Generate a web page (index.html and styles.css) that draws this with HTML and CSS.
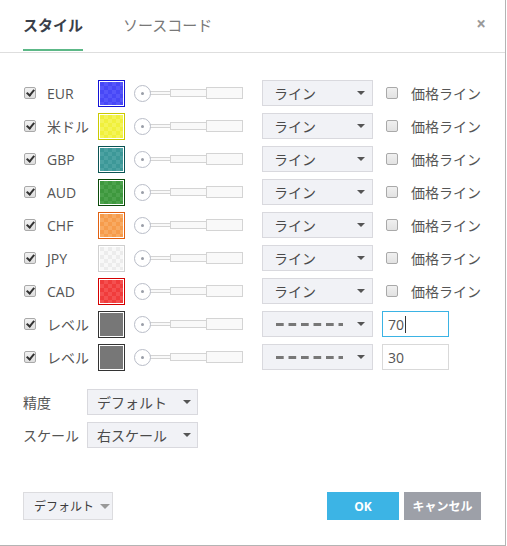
FILE: index.html
```html
<!DOCTYPE html>
<html lang="ja">
<head>
<meta charset="utf-8">
<link rel="stylesheet" href="styles.css">
</head>
<body>
<div class="dialog">
  <div class="header">
    <div class="tab active">スタイル</div>
    <div class="tab">ソースコード</div>
    <div class="close">×</div>
  </div>
  <div class="content">
    <div class="rows">
      <div class="row">
        <span class="cb checked"></span><span class="name">EUR</span>
        <span class="swatch" style="border-color:#1212d6;--fill:#4848f6;--fill2:#5656fa"></span>
        <span class="slider"><span class="knob"></span><span class="s1"></span><span class="s2"></span><span class="s3"></span></span>
        <span class="select"><span class="val">ライン</span><span class="arrow"></span></span>
        <span class="cb pcb"></span><span class="plabel">価格ライン</span>
      </div>
      <div class="row">
        <span class="cb checked"></span><span class="name">米ドル</span>
        <span class="swatch" style="border-color:#caca00;--fill:#f0f03c;--fill2:#f4f458"></span>
        <span class="slider"><span class="knob"></span><span class="s1"></span><span class="s2"></span><span class="s3"></span></span>
        <span class="select"><span class="val">ライン</span><span class="arrow"></span></span>
        <span class="cb pcb"></span><span class="plabel">価格ライン</span>
      </div>
      <div class="row">
        <span class="cb checked"></span><span class="name">GBP</span>
        <span class="swatch" style="border-color:#0b5454;--fill:#3d9898;--fill2:#4ca2a2"></span>
        <span class="slider"><span class="knob"></span><span class="s1"></span><span class="s2"></span><span class="s3"></span></span>
        <span class="select"><span class="val">ライン</span><span class="arrow"></span></span>
        <span class="cb pcb"></span><span class="plabel">価格ライン</span>
      </div>
      <div class="row">
        <span class="cb checked"></span><span class="name">AUD</span>
        <span class="swatch" style="border-color:#0a4a0a;--fill:#3e983e;--fill2:#4ca24c"></span>
        <span class="slider"><span class="knob"></span><span class="s1"></span><span class="s2"></span><span class="s3"></span></span>
        <span class="select"><span class="val">ライン</span><span class="arrow"></span></span>
        <span class="cb pcb"></span><span class="plabel">価格ライン</span>
      </div>
      <div class="row">
        <span class="cb checked"></span><span class="name">CHF</span>
        <span class="swatch" style="border-color:#e06010;--fill:#f69c4c;--fill2:#f8aa62"></span>
        <span class="slider"><span class="knob"></span><span class="s1"></span><span class="s2"></span><span class="s3"></span></span>
        <span class="select"><span class="val">ライン</span><span class="arrow"></span></span>
        <span class="cb pcb"></span><span class="plabel">価格ライン</span>
      </div>
      <div class="row">
        <span class="cb checked"></span><span class="name">JPY</span>
        <span class="swatch" style="border-color:#cfcfcf;--fill:#ececec;--fill2:#f8f8f8"></span>
        <span class="slider"><span class="knob"></span><span class="s1"></span><span class="s2"></span><span class="s3"></span></span>
        <span class="select"><span class="val">ライン</span><span class="arrow"></span></span>
        <span class="cb pcb"></span><span class="plabel">価格ライン</span>
      </div>
      <div class="row">
        <span class="cb checked"></span><span class="name">CAD</span>
        <span class="swatch" style="border-color:#d40000;--fill:#f03c3c;--fill2:#f45050"></span>
        <span class="slider"><span class="knob"></span><span class="s1"></span><span class="s2"></span><span class="s3"></span></span>
        <span class="select"><span class="val">ライン</span><span class="arrow"></span></span>
        <span class="cb pcb"></span><span class="plabel">価格ライン</span>
      </div>
      <div class="row">
        <span class="cb checked"></span><span class="name">レベル</span>
        <span class="swatch" style="border-color:#333;--fill:#777;--fill2:#777"></span>
        <span class="slider"><span class="knob"></span><span class="s1"></span><span class="s2"></span><span class="s3"></span></span>
        <span class="select"><span class="dashes"></span><span class="arrow"></span></span>
        <span class="input focused">70<span class="caret"></span></span>
      </div>
      <div class="row">
        <span class="cb checked"></span><span class="name">レベル</span>
        <span class="swatch" style="border-color:#333;--fill:#777;--fill2:#777"></span>
        <span class="slider"><span class="knob"></span><span class="s1"></span><span class="s2"></span><span class="s3"></span></span>
        <span class="select"><span class="dashes"></span><span class="arrow"></span></span>
        <span class="input">30</span>
      </div>
    </div>
    <div class="opts">
      <div class="optrow">
        <span class="olabel">精度</span>
        <span class="select small"><span class="val">デフォルト</span><span class="arrow"></span></span>
      </div>
      <div class="optrow">
        <span class="olabel">スケール</span>
        <span class="select small"><span class="val">右スケール</span><span class="arrow"></span></span>
      </div>
    </div>
  </div>
  <div class="footer">
    <span class="btn-default">デフォルト<span class="arrow light"></span></span>
    <span class="spacer"></span>
    <span class="btn ok">OK</span>
    <span class="btn cancel">キャンセル</span>
  </div>
</div>
</body>
</html>
```
FILE: styles.css
```css
* { box-sizing: border-box; }
html, body { margin: 0; padding: 0; background: #fff; }
body {
  font-family: "Open Sans", "Noto Sans CJK JP", sans-serif;
  font-size: 14px;
  color: #4a4a4a;
}
.dialog {
  width: 506px;
  height: 546px;
  border-right: 1px solid #b4b4b4;
  border-bottom: 1px solid #b4b4b4;
  display: flex;
  flex-direction: column;
  background: #fff;
}
.header {
  height: 53px;
  border-bottom: 1px solid #dedede;
  display: flex;
  align-items: stretch;
  padding-left: 23px;
  padding-right: 19px;
  flex: none;
}
.tab {
  font-size: 15px;
  color: #787878;
  display: flex;
  align-items: center;
  padding-top: 2px;
  padding-bottom: 3px;
  margin-right: 40px;
  border-bottom: 2px solid transparent;
  margin-bottom: 1px;
  white-space: nowrap;
}
.tab.active {
  color: #3a3f4a;
  font-weight: 700;
  border-bottom-color: #5cb887;
}
.close {
  margin-left: auto;
  color: #9a9a9a;
  font-size: 17px;
  font-weight: 700;
  display: flex;
  align-items: center;
  padding-bottom: 6px;
}
.content {
  flex: 1;
  padding-top: 27px;
}
.rows {
  display: flex;
  flex-direction: column;
  gap: 7px;
}
.row {
  height: 26px;
  display: flex;
  align-items: center;
  padding-left: 24px;
}
.cb {
  width: 12px;
  height: 12px;
  border: 1px solid #a9a9a9;
  border-radius: 2px;
  background: linear-gradient(#f2f2f2, #dedede);
  flex: none;
  position: relative;
}
.cb.checked::after {
  content: "";
  position: absolute;
  left: 3px;
  top: 0px;
  width: 3px;
  height: 6px;
  border-right: 2px solid #333;
  border-bottom: 2px solid #333;
  transform: rotate(40deg);
}
.name {
  width: 51px;
  margin-left: 11px;
  color: #555;
  white-space: nowrap;
}
.swatch {
  width: 27px;
  height: 27px;
  border: 1px solid;
  background-color: #fff;
  flex: none;
  position: relative;
}
.swatch::after {
  content: "";
  position: absolute;
  inset: 1px;
  background-color: var(--fill);
  background-image:
    linear-gradient(45deg, var(--fill2) 25%, transparent 25%, transparent 75%, var(--fill2) 75%),
    linear-gradient(45deg, var(--fill2) 25%, transparent 25%, transparent 75%, var(--fill2) 75%);
  background-size: 8px 8px;
  background-position: 0 0, 4px 4px;
}
.slider {
  margin-left: 9px;
  width: 110px;
  display: flex;
  align-items: center;
  flex: none;
}
.knob {
  width: 17px;
  height: 17px;
  min-width: 17px;
  border: 1px solid #b9bdc8;
  border-radius: 50%;
  background: #fff;
  position: relative;
  flex: none;
}
.knob::after {
  content: "";
  position: absolute;
  left: 6px;
  top: 6px;
  width: 3px;
  height: 3px;
  border-radius: 50%;
  background: #9a9ea8;
}
.s1, .s2, .s3 {
  border: 1px solid #d4d4d4;
  background: #f9f9f9;
  flex: none;
}
.s1 { width: 21px; height: 4px; margin-left: -1px; border-left: none; }
.s2 { width: 37px; height: 8px; margin-left: -1px; }
.s3 { width: 37px; height: 12px; margin-left: -1px; }
.select {
  margin-left: 18px;
  width: 111px;
  height: 26px;
  border: 1px solid #d9d9de;
  background: #f1f2f6;
  display: flex;
  align-items: center;
  padding-left: 11px;
  padding-right: 7px;
  flex: none;
  color: #4a4a4a;
  white-space: nowrap;
}
.val { flex: 1; }
.arrow {
  width: 0;
  height: 0;
  border-left: 4px solid transparent;
  border-right: 4px solid transparent;
  border-top: 4px solid #555;
  flex: none;
  margin-left: auto;
}
.arrow.light { border-top-color: #999; border-left-width: 5px; border-right-width: 5px; border-top-width: 5px; margin-left: 6px; }
.dashes {
  flex: 1;
  height: 3px;
  margin-right: 14px;
  margin-left: 2px;
  background-image: linear-gradient(90deg, #777 8px, transparent 8px);
  background-size: 12.5px 3px;
  background-repeat: repeat-x;
}
.pcb {
  margin-left: 13px;
  background: linear-gradient(#f0f0f0, #e2e2e2);
}
.plabel {
  margin-left: 13px;
  color: #555;
  white-space: nowrap;
}
.input {
  margin-left: 9px;
  width: 67px;
  height: 26px;
  border: 1px solid #d9d9d9;
  display: flex;
  align-items: center;
  padding-left: 5px;
  color: #555;
  flex: none;
}
.input.focused { border-color: #3bb3e4; }
.caret {
  display: inline-block;
  width: 1px;
  height: 17px;
  background: #333;
  margin-left: 1px;
}
.opts {
  margin-top: 19px;
  display: flex;
  flex-direction: column;
  gap: 7px;
  padding-left: 23px;
}
.optrow {
  height: 26px;
  display: flex;
  align-items: center;
}
.olabel {
  width: 64px;
  color: #555;
  white-space: nowrap;
}
.select.small {
  margin-left: 0;
  padding-left: 9px;
  padding-right: 6px;
}
.footer {
  height: 28px;
  flex: none;
  display: flex;
  align-items: flex-start;
  padding: 0 24px 0 23px;
  margin-bottom: 25px;
}
.btn-default {
  width: 90px;
  height: 28px;
  border: 1px solid #dcdcdf;
  background: #f1f2f6;
  display: flex;
  align-items: center;
  padding-left: 10px;
  font-size: 12px;
  color: #3c3c3c;
  white-space: nowrap;
}
.spacer { flex: 1; }
.btn {
  height: 28px;
  display: flex;
  align-items: center;
  justify-content: center;
  color: #fff;
  font-weight: 700;
  font-size: 12px;
  white-space: nowrap;
}
.ok { width: 72px; background: #3cb4e5; }
.cancel { width: 77px; background: #9da0a8; margin-left: 5px; }
```
